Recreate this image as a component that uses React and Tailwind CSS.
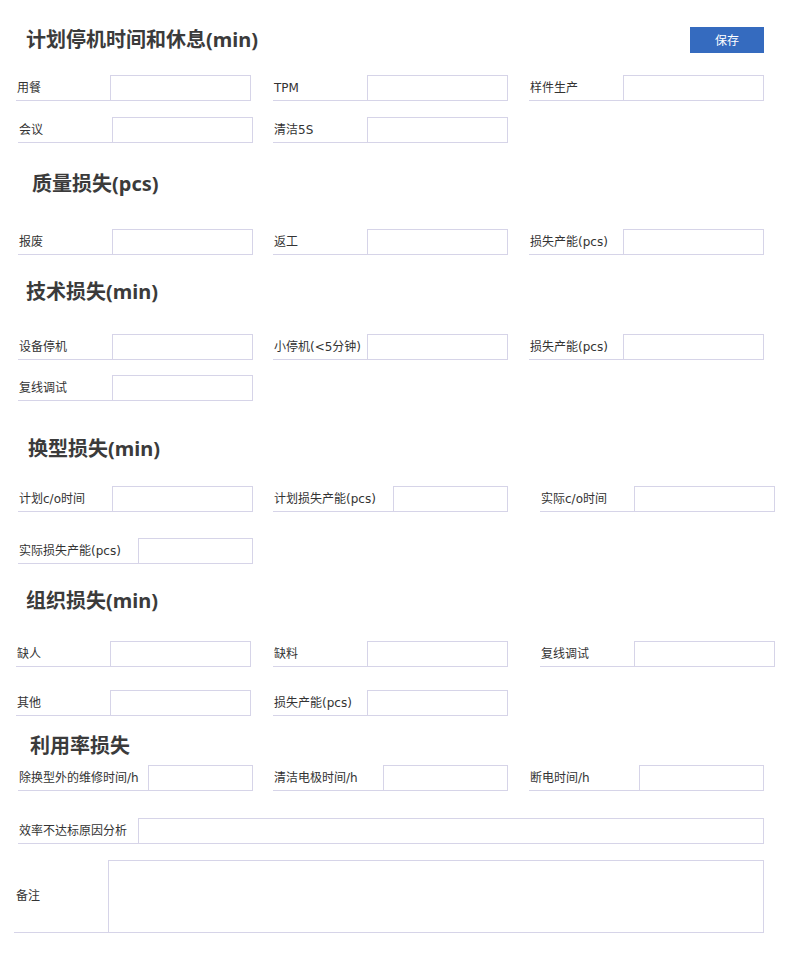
import clsx from 'clsx'

function Field({ label, className, labelClass = 'w-[94px]', inputClass = 'w-[141px]' }) {
  return (
    <div className={clsx('flex', className)}>
      <span className={clsx('flex h-[26px] items-center border-b border-[#d6d4e8] pl-[1px] text-[12px] text-[#333] whitespace-nowrap', labelClass)}>
        {label}
      </span>
      <input type="text" className={clsx('h-[26px] border border-[#d6d4e8] bg-white outline-none', inputClass)} />
    </div>
  )
}

function Title({ children, className }) {
  return (
    <h2 className={clsx("h-[26px] font-['Noto_Sans','Noto_Sans_CJK_SC',sans-serif] text-[20px] font-bold leading-[26px] text-[#3b3b3b]", className)}>
      {children}
    </h2>
  )
}

function App() {
  return (
    <div className="min-h-screen bg-white font-['DejaVu_Sans','Noto_Sans_CJK_SC',sans-serif] pt-[27px]">
      <div className="flex h-[26px] items-center justify-between pr-[31px]">
        <Title className="pl-[26px]">计划停机时间和休息(min)</Title>
        <button className="h-[26px] w-[74px] bg-[#356bbf] font-['Noto_Sans_CJK_SC',sans-serif] text-[12px] text-white">保存</button>
      </div>

      <div className="mt-[22px] flex">
        <Field label="用餐" className="ml-[16px]" />
        <Field label="TPM" className="ml-[22px]" />
        <Field label="样件生产" className="ml-[21px]" />
      </div>
      <div className="mt-[16px] flex">
        <Field label="会议" className="ml-[18px]" />
        <Field label="清洁5S" className="ml-[20px]" />
      </div>

      <Title className="mt-[28px] pl-[32px]">质量损失(pcs)</Title>
      <div className="mt-[32px] flex">
        <Field label="报废" className="ml-[18px]" />
        <Field label="返工" className="ml-[20px]" />
        <Field label="损失产能(pcs)" className="ml-[21px]" />
      </div>

      <Title className="mt-[24px] pl-[26px]">技术损失(min)</Title>
      <div className="mt-[29px] flex">
        <Field label="设备停机" className="ml-[18px]" />
        <Field label="小停机(<5分钟)" className="ml-[20px]" />
        <Field label="损失产能(pcs)" className="ml-[21px]" />
      </div>
      <div className="mt-[15px] flex">
        <Field label="复线调试" className="ml-[18px]" />
      </div>

      <Title className="mt-[35px] pl-[28px]">换型损失(min)</Title>
      <div className="mt-[24px] flex">
        <Field label="计划c/o时间" className="ml-[18px]" />
        <Field label="计划损失产能(pcs)" className="ml-[20px]" labelClass="w-[120px]" inputClass="w-[115px]" />
        <Field label="实际c/o时间" className="ml-[32px]" />
      </div>
      <div className="mt-[26px] flex">
        <Field label="实际损失产能(pcs)" className="ml-[18px]" labelClass="w-[120px]" inputClass="w-[115px]" />
      </div>

      <Title className="mt-[24px] pl-[26px]">组织损失(min)</Title>
      <div className="mt-[27px] flex">
        <Field label="缺人" className="ml-[16px]" />
        <Field label="缺料" className="ml-[22px]" />
        <Field label="复线调试" className="ml-[32px]" />
      </div>
      <div className="mt-[23px] flex">
        <Field label="其他" className="ml-[16px]" />
        <Field label="损失产能(pcs)" className="ml-[22px]" />
      </div>

      <Title className="mt-[17px] pl-[30px]">利用率损失</Title>
      <div className="mt-[6px] flex">
        <Field label="除换型外的维修时间/h" className="ml-[18px]" labelClass="w-[130px]" inputClass="w-[105px]" />
        <Field label="清洁电极时间/h" className="ml-[20px]" labelClass="w-[110px]" inputClass="w-[125px]" />
        <Field label="断电时间/h" className="ml-[21px]" labelClass="w-[110px]" inputClass="w-[125px]" />
      </div>
      <div className="mt-[27px] flex">
        <Field label="效率不达标原因分析" className="ml-[18px]" labelClass="w-[120px]" inputClass="w-[626px]" />
      </div>
      <div className="mt-[16px] flex pb-[23px]">
        <span className="ml-[14px] flex h-[73px] w-[94px] items-center border-b border-[#d6d4e8] pl-[2px] text-[12px] text-[#333]">
          备注
        </span>
        <textarea className="h-[73px] w-[656px] resize-none border border-[#d6d4e8] outline-none" />
      </div>
    </div>
  )
}

export default App
